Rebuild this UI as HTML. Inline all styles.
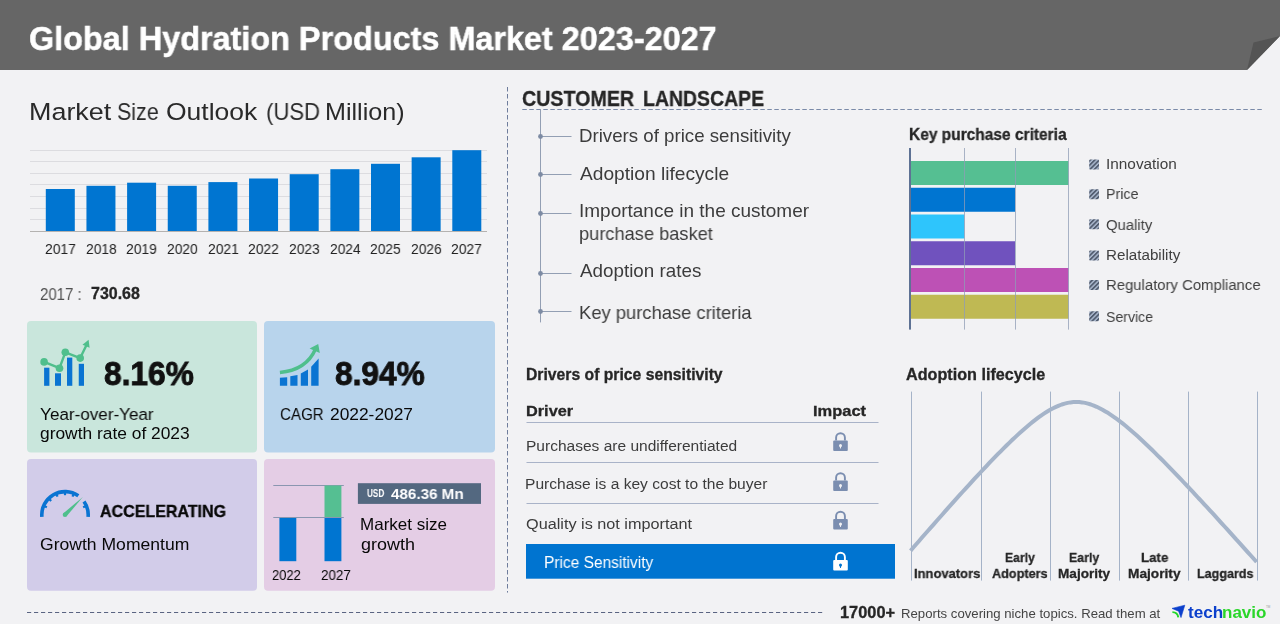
<!DOCTYPE html>
<html><head><meta charset="utf-8"><style>
html,body{margin:0;padding:0;}
body{width:1280px;height:624px;overflow:hidden;background:#f2f2f4;position:relative;font-family:"Liberation Sans",sans-serif;}
.t{position:absolute;white-space:nowrap;line-height:1;transform-origin:0 0;will-change:transform;}
svg{position:absolute;left:0;top:0;}
</style></head><body>
<svg width="1280" height="624" viewBox="0 0 1280 624">
<defs><pattern id="hatch" patternUnits="userSpaceOnUse" width="3.2" height="3.2" patternTransform="rotate(45)"><rect width="3.2" height="3.2" fill="#aebcd2"/><rect width="1.8" height="3.2" fill="#525d70"/></pattern></defs>
<polygon points="0,0 1280,0 1280,36 1247,70 0,70" fill="#666666"/>
<polygon points="1247,70 1253.5,42.5 1280,36" fill="#545454"/>
<rect x="30" y="150" width="457" height="1" fill="#dcdce0"/>
<rect x="30" y="161" width="457" height="1" fill="#dcdce0"/>
<rect x="30" y="173" width="457" height="1" fill="#dcdce0"/>
<rect x="30" y="184" width="457" height="1" fill="#dcdce0"/>
<rect x="30" y="196" width="457" height="1" fill="#dcdce0"/>
<rect x="30" y="208" width="457" height="1" fill="#dcdce0"/>
<rect x="30" y="219" width="457" height="1" fill="#dcdce0"/>
<rect x="30" y="231" width="457" height="1" fill="#b4b2b0"/>
<rect x="45.80" y="189" width="29.0" height="42.00" fill="#0075d1"/>
<rect x="86.45" y="185.8" width="29.0" height="45.20" fill="#0075d1"/>
<rect x="127.10" y="182.7" width="29.0" height="48.30" fill="#0075d1"/>
<rect x="167.75" y="185.8" width="29.0" height="45.20" fill="#0075d1"/>
<rect x="208.40" y="182.1" width="29.0" height="48.90" fill="#0075d1"/>
<rect x="249.05" y="178.5" width="29.0" height="52.50" fill="#0075d1"/>
<rect x="289.70" y="174.2" width="29.0" height="56.80" fill="#0075d1"/>
<rect x="330.35" y="169.2" width="29.0" height="61.80" fill="#0075d1"/>
<rect x="371.00" y="163.8" width="29.0" height="67.20" fill="#0075d1"/>
<rect x="411.65" y="157.3" width="29.0" height="73.70" fill="#0075d1"/>
<rect x="452.30" y="150.2" width="29.0" height="80.80" fill="#0075d1"/>
<rect x="27" y="321" width="230" height="131.5" rx="4" fill="#c9e6dc"/>
<rect x="264" y="321" width="231" height="131.5" rx="4" fill="#b8d4ec"/>
<rect x="27" y="459" width="230" height="131.7" rx="4" fill="#d2cce9"/>
<rect x="264" y="459" width="231" height="131.7" rx="4" fill="#e4cde5"/>
<rect x="44.1" y="367.7" width="5.30" height="18.10" fill="#0a74d2"/>
<rect x="55" y="373.3" width="6.00" height="12.50" fill="#0a74d2"/>
<rect x="67" y="357.6" width="5.30" height="28.20" fill="#0a74d2"/>
<rect x="78.75" y="363.8" width="5.25" height="22.00" fill="#0a74d2"/>
<polyline points="44.1,361.9 59.5,368.2 65.3,352.3 80.2,358.1 87,344" fill="none" stroke="#4fbf8c" stroke-width="2.4" stroke-linejoin="round"/>
<circle cx="44.1" cy="361.9" r="3.8" fill="#4fbf8c"/>
<circle cx="59.5" cy="368.2" r="3.8" fill="#4fbf8c"/>
<circle cx="65.3" cy="352.3" r="3.8" fill="#4fbf8c"/>
<circle cx="80.2" cy="358.1" r="3.8" fill="#4fbf8c"/>
<polygon points="82.5,344.8 88.6,339.8 89.6,347.8" fill="#4fbf8c"/>
<polygon points="279.9,377.8 287.2,377.2 287.2,385.8 279.9,385.8" fill="#0a74d2"/>
<polygon points="290.3,376.3 297.5,374.9 297.5,385.8 290.3,385.8" fill="#0a74d2"/>
<polygon points="300.8,373.5 308,369.6 308,385.8 300.8,385.8" fill="#0a74d2"/>
<polygon points="311.2,366.7 318.6,358.6 318.6,385.8 311.2,385.8" fill="#0a74d2"/>
<path d="M279.9,372.5 C296,371 309,364 315.5,349" fill="none" stroke="#4fbf8c" stroke-width="3.4"/>
<polygon points="309.6,348.6 318.2,344 319.8,353" fill="#4fbf8c"/>
<path d="M41.89,516.82 A23.2,23.2 0 0 1 78.31,495.80" fill="none" stroke="#0a74d2" stroke-width="3.6"/>
<path d="M84.00,501.49 A23.2,23.2 0 0 1 88.11,516.82" fill="none" stroke="#0a74d2" stroke-width="3.6"/>
<line x1="44.49" y1="506.30" x2="46.89" y2="507.30" stroke="#0a74d2" stroke-width="2.2"/>
<line x1="49.30" y1="499.10" x2="51.14" y2="500.94" stroke="#0a74d2" stroke-width="2.2"/>
<line x1="56.50" y1="494.29" x2="57.50" y2="496.69" stroke="#0a74d2" stroke-width="2.2"/>
<line x1="65.00" y1="492.60" x2="65.00" y2="495.20" stroke="#0a74d2" stroke-width="2.2"/>
<line x1="73.50" y1="494.29" x2="72.50" y2="496.69" stroke="#0a74d2" stroke-width="2.2"/>
<line x1="85.51" y1="506.30" x2="83.11" y2="507.30" stroke="#0a74d2" stroke-width="2.2"/>
<polygon points="63.44,513.24 82.82,496.98 66.56,516.36" fill="#4fbf8c"/>
<circle cx="65" cy="514.8" r="2.3" fill="#4fbf8c"/>
<rect x="273.3" y="485" width="70.5" height="1" fill="#8a96b0"/>
<rect x="279.4" y="517.4" width="16.9" height="43.8" fill="#0075d1"/>
<rect x="324.5" y="517.4" width="16.9" height="43.8" fill="#0075d1"/>
<rect x="324.5" y="485.5" width="16.9" height="31.9" fill="#55bf92"/>
<rect x="273.3" y="517" width="70.5" height="1" fill="#8a96b0"/>
<rect x="357.9" y="483.2" width="123.1" height="20.7" fill="#536880"/>
<line x1="507.5" y1="87" x2="507.5" y2="592.6" stroke="#6f7d9c" stroke-width="1" stroke-dasharray="4.5 2.5"/>
<line x1="522.3" y1="109.5" x2="1262" y2="109.5" stroke="#7a8aa8" stroke-width="1" stroke-dasharray="4.5 2.5"/>
<rect x="540" y="110" width="1" height="212.4" fill="#939fb3"/>
<rect x="540.5" y="136" width="31" height="1" fill="#939fb3"/>
<circle cx="540.5" cy="136.5" r="2.4" fill="#7d8ba3"/>
<rect x="540.5" y="174" width="31" height="1" fill="#939fb3"/>
<circle cx="540.5" cy="174.5" r="2.4" fill="#7d8ba3"/>
<rect x="540.5" y="213" width="31" height="1" fill="#939fb3"/>
<circle cx="540.5" cy="213.5" r="2.4" fill="#7d8ba3"/>
<rect x="540.5" y="273" width="31" height="1" fill="#939fb3"/>
<circle cx="540.5" cy="273.5" r="2.4" fill="#7d8ba3"/>
<rect x="540.5" y="311" width="31" height="1" fill="#939fb3"/>
<circle cx="540.5" cy="311.5" r="2.4" fill="#7d8ba3"/>
<rect x="911" y="161.00" width="157.50" height="24" fill="#55bf92"/>
<rect x="911" y="187.75" width="104.00" height="24" fill="#0075d1"/>
<rect x="911" y="214.50" width="53.40" height="24" fill="#2ec5fc"/>
<rect x="911" y="241.25" width="104.00" height="24" fill="#7052be"/>
<rect x="911" y="268.00" width="157.50" height="24" fill="#bd51b5"/>
<rect x="911" y="294.75" width="157.50" height="24" fill="#bfb953"/>
<rect x="964" y="148" width="1" height="181.6" fill="#8f9cb5" fill-opacity="0.75"/>
<rect x="1015" y="148" width="1" height="181.6" fill="#8f9cb5" fill-opacity="0.75"/>
<rect x="1068" y="148" width="1" height="181.6" fill="#8f9cb5" fill-opacity="0.75"/>
<rect x="909" y="148" width="2" height="181.6" fill="#5e7294"/>
<rect x="1089.2" y="159.4" width="9.8" height="10" rx="1" fill="url(#hatch)"/>
<rect x="1089.2" y="189.2" width="9.8" height="10" rx="1" fill="url(#hatch)"/>
<rect x="1089.2" y="219.3" width="9.8" height="10" rx="1" fill="url(#hatch)"/>
<rect x="1089.2" y="250.4" width="9.8" height="10" rx="1" fill="url(#hatch)"/>
<rect x="1089.2" y="280" width="9.8" height="10" rx="1" fill="url(#hatch)"/>
<rect x="1089.2" y="311.2" width="9.8" height="10" rx="1" fill="url(#hatch)"/>
<rect x="526.5" y="422" width="352" height="1" fill="#a9b3c8"/>
<rect x="526.5" y="462" width="352" height="1" fill="#a9b3c8"/>
<rect x="526.5" y="503" width="352" height="1" fill="#a9b3c8"/>
<rect x="526" y="544" width="369" height="34.7" fill="#0074d0"/>
<path d="M836.1,440.6 V437.6 A4.4,4.4 0 0 1 844.9,437.6 V440.6" fill="none" stroke="#7b8eb0" stroke-width="1.9"/><rect x="833.2" y="440.4" width="14.6" height="10.5" rx="1" fill="#7b8eb0"/><circle cx="840.5" cy="445.6" r="1.5" fill="#f2f2f4"/><polygon points="839.7,445.6 841.3,445.6 840.9,448.4 840.1,448.4" fill="#f2f2f4"/>
<path d="M836.1,480.6 V477.6 A4.4,4.4 0 0 1 844.9,477.6 V480.6" fill="none" stroke="#7b8eb0" stroke-width="1.9"/><rect x="833.2" y="480.4" width="14.6" height="10.5" rx="1" fill="#7b8eb0"/><circle cx="840.5" cy="485.6" r="1.5" fill="#f2f2f4"/><polygon points="839.7,485.6 841.3,485.6 840.9,488.4 840.1,488.4" fill="#f2f2f4"/>
<path d="M836.1,519.1 V516.1 A4.4,4.4 0 0 1 844.9,516.1 V519.1" fill="none" stroke="#7b8eb0" stroke-width="1.9"/><rect x="833.2" y="518.9" width="14.6" height="10.5" rx="1" fill="#7b8eb0"/><circle cx="840.5" cy="524.1" r="1.5" fill="#f2f2f4"/><polygon points="839.7,524.1 841.3,524.1 840.9,526.9 840.1,526.9" fill="#f2f2f4"/>
<path d="M836.1,560.1 V557.1 A4.4,4.4 0 0 1 844.9,557.1 V560.1" fill="none" stroke="#ffffff" stroke-width="1.9"/><rect x="833.2" y="559.9" width="14.6" height="10.5" rx="1" fill="#ffffff"/><circle cx="840.5" cy="565.1" r="1.5" fill="#0074d0"/><polygon points="839.7,565.1 841.3,565.1 840.9,567.9 840.1,567.9" fill="#0074d0"/>
<rect x="911" y="391.6" width="1" height="189" fill="#a5b3c8"/>
<rect x="981" y="391.6" width="1" height="189" fill="#a5b3c8"/>
<rect x="1050" y="391.6" width="1" height="189" fill="#a5b3c8"/>
<rect x="1119" y="391.6" width="1" height="189" fill="#a5b3c8"/>
<rect x="1188" y="391.6" width="1" height="189" fill="#a5b3c8"/>
<rect x="1257" y="391.6" width="1" height="189" fill="#a5b3c8"/>
<path d="M910.6,550.7 L913.5,547.3 L916.4,544.0 L919.3,540.7 L922.2,537.3 L925.1,534.0 L928.0,530.7 L931.0,527.4 L933.9,524.1 L936.8,520.8 L939.7,517.5 L942.6,514.2 L945.5,510.9 L948.4,507.6 L951.3,504.4 L954.2,501.1 L957.1,497.9 L960.0,494.7 L962.9,491.5 L965.8,488.3 L968.8,485.1 L971.7,481.9 L974.6,478.7 L977.5,475.6 L980.4,472.5 L983.3,469.4 L986.2,466.3 L989.1,463.2 L992.0,460.2 L994.9,457.2 L997.8,454.2 L1000.7,451.3 L1003.6,448.4 L1006.5,445.5 L1009.5,442.6 L1012.4,439.8 L1015.3,437.1 L1018.2,434.4 L1021.1,431.8 L1024.0,429.2 L1026.9,426.7 L1029.8,424.2 L1032.7,421.9 L1035.6,419.6 L1038.5,417.4 L1041.4,415.3 L1044.3,413.4 L1047.3,411.5 L1050.2,409.8 L1053.1,408.3 L1056.0,406.9 L1058.9,405.6 L1061.8,404.5 L1064.7,403.6 L1067.6,402.9 L1070.5,402.4 L1073.4,402.1 L1076.3,402.0 L1079.2,402.1 L1082.1,402.4 L1085.1,402.9 L1088.0,403.6 L1090.9,404.5 L1093.8,405.6 L1096.7,406.8 L1099.6,408.2 L1102.5,409.7 L1105.4,411.4 L1108.3,413.1 L1111.2,415.1 L1114.1,417.1 L1117.0,419.2 L1119.9,421.4 L1122.9,423.7 L1125.8,426.0 L1128.7,428.5 L1131.6,431.0 L1134.5,433.5 L1137.4,436.1 L1140.3,438.8 L1143.2,441.5 L1146.1,444.2 L1149.0,447.0 L1151.9,449.8 L1154.8,452.7 L1157.7,455.6 L1160.7,458.5 L1163.6,461.4 L1166.5,464.3 L1169.4,467.3 L1172.3,470.3 L1175.2,473.3 L1178.1,476.4 L1181.0,479.4 L1183.9,482.5 L1186.8,485.5 L1189.7,488.6 L1192.6,491.7 L1195.5,494.8 L1198.4,498.0 L1201.4,501.1 L1204.3,504.3 L1207.2,507.4 L1210.1,510.6 L1213.0,513.7 L1215.9,516.9 L1218.8,520.1 L1221.7,523.3 L1224.6,526.5 L1227.5,529.7 L1230.4,532.9 L1233.3,536.1 L1236.2,539.4 L1239.2,542.6 L1242.1,545.8 L1245.0,549.1 L1247.9,552.3 L1250.8,555.5 L1253.7,558.8 L1256.6,562.0" fill="none" stroke="#a5b4c9" stroke-width="4" stroke-linejoin="round"/>
<line x1="27" y1="612.5" x2="823" y2="612.5" stroke="#5a6482" stroke-width="1" stroke-dasharray="4.2 2.8"/>
<path d="M1172,608.4 L1184.8,605.2 L1181,617.6 L1178.6,611.2 Z" fill="#0c40cc" stroke="#0c40cc" stroke-width="0.6" stroke-linejoin="round"/>
<path d="M1172.4,612.1 Q1177.6,612.2 1178.3,617.4" fill="none" stroke="#22d628" stroke-width="1.9"/>
<text x="1266" y="607.5" font-family="Liberation Sans" font-size="3" fill="#9a9a9a">TM</text>
</svg>
<span class="t" style="left:29.30px;top:21.81px;font-size:33.2px;font-weight:700;color:#ffffff;transform:scaleX(0.9760);-webkit-text-stroke:0.5px #fff;">Global Hydration Products Market 2023-2027</span>
<span class="t" style="left:28.77px;top:101.10px;font-size:23.7px;font-weight:400;color:#2a2a2a;transform:scaleX(1.1368);">Market</span>
<span class="t" style="left:116.98px;top:101.10px;font-size:23.7px;font-weight:400;color:#2a2a2a;transform:scaleX(0.9045);">Size</span>
<span class="t" style="left:166.24px;top:101.10px;font-size:23.7px;font-weight:400;color:#2a2a2a;transform:scaleX(1.1180);">Outlook</span>
<span class="t" style="left:265.90px;top:101.10px;font-size:23.7px;font-weight:400;color:#2a2a2a;transform:scaleX(0.9339);">(USD</span>
<span class="t" style="left:325.21px;top:101.10px;font-size:23.7px;font-weight:400;color:#2a2a2a;transform:scaleX(1.0606);">Million)</span>
<span class="t" style="left:44.97px;top:241.76px;font-size:14.2px;font-weight:400;color:#222;transform:scaleX(0.9759);">2017</span>
<span class="t" style="left:85.62px;top:241.76px;font-size:14.2px;font-weight:400;color:#222;transform:scaleX(0.9719);">2018</span>
<span class="t" style="left:126.27px;top:241.76px;font-size:14.2px;font-weight:400;color:#222;transform:scaleX(0.9759);">2019</span>
<span class="t" style="left:166.92px;top:241.76px;font-size:14.2px;font-weight:400;color:#222;transform:scaleX(0.9719);">2020</span>
<span class="t" style="left:207.57px;top:241.76px;font-size:14.2px;font-weight:400;color:#222;transform:scaleX(0.9759);">2021</span>
<span class="t" style="left:248.22px;top:241.76px;font-size:14.2px;font-weight:400;color:#222;transform:scaleX(0.9759);">2022</span>
<span class="t" style="left:288.87px;top:241.76px;font-size:14.2px;font-weight:400;color:#222;transform:scaleX(0.9719);">2023</span>
<span class="t" style="left:329.52px;top:241.76px;font-size:14.2px;font-weight:400;color:#222;transform:scaleX(0.9679);">2024</span>
<span class="t" style="left:370.17px;top:241.76px;font-size:14.2px;font-weight:400;color:#222;transform:scaleX(0.9719);">2025</span>
<span class="t" style="left:410.82px;top:241.76px;font-size:14.2px;font-weight:400;color:#222;transform:scaleX(0.9719);">2026</span>
<span class="t" style="left:451.47px;top:241.76px;font-size:14.2px;font-weight:400;color:#222;transform:scaleX(0.9759);">2027</span>
<span class="t" style="left:40.08px;top:287.01px;font-size:15.6px;font-weight:400;color:#505050;transform:scaleX(0.9624);">2017 :</span>
<span class="t" style="left:90.77px;top:285.60px;font-size:15.8px;font-weight:700;color:#262626;transform:scaleX(1.0116);-webkit-text-stroke:0.3px #262626;">730.68</span>
<span class="t" style="left:103.83px;top:357.60px;font-size:32.8px;font-weight:700;color:#111;transform:scaleX(0.9668);-webkit-text-stroke:0.9px #111;">8.16%</span>
<span class="t" style="left:40.33px;top:405.70px;font-size:17.2px;font-weight:400;color:#080808;transform:scaleX(0.9943);">Year-over-Year</span>
<span class="t" style="left:39.94px;top:425.41px;font-size:17.2px;font-weight:400;color:#080808;transform:scaleX(1.0106);">growth rate of 2023</span>
<span class="t" style="left:334.83px;top:357.60px;font-size:32.8px;font-weight:700;color:#111;transform:scaleX(0.9657);-webkit-text-stroke:0.9px #111;">8.94%</span>
<span class="t" style="left:279.93px;top:405.70px;font-size:17.2px;font-weight:400;color:#080808;transform:scaleX(0.8792);">CAGR</span>
<span class="t" style="left:329.62px;top:405.70px;font-size:17.2px;font-weight:400;color:#080808;transform:scaleX(1.0099);">2022-2027</span>
<span class="t" style="left:100.02px;top:503.91px;font-size:16.6px;font-weight:700;color:#080808;transform:scaleX(0.9650);-webkit-text-stroke:0.35px #080808;">ACCELERATING</span>
<span class="t" style="left:39.81px;top:535.70px;font-size:17.2px;font-weight:400;color:#080808;transform:scaleX(1.0218);">Growth Momentum</span>
<span class="t" style="left:271.70px;top:567.91px;font-size:14px;font-weight:400;color:#080808;transform:scaleX(0.9277);">2022</span>
<span class="t" style="left:321.28px;top:567.91px;font-size:14px;font-weight:400;color:#080808;transform:scaleX(0.9613);">2027</span>
<span class="t" style="left:366.90px;top:488.91px;font-size:10.2px;font-weight:700;color:#fff;transform:scaleX(0.8000);">USD</span>
<span class="t" style="left:390.65px;top:485.76px;font-size:15.4px;font-weight:700;color:#fff;transform:scaleX(0.9879);">486.36 Mn</span>
<span class="t" style="left:359.78px;top:515.60px;font-size:16.5px;font-weight:400;color:#080808;transform:scaleX(1.0310);">Market size</span>
<span class="t" style="left:360.52px;top:535.60px;font-size:16.5px;font-weight:400;color:#080808;transform:scaleX(1.0883);">growth</span>
<span class="t" style="left:522.19px;top:87.60px;font-size:21.2px;font-weight:700;color:#262626;transform:scaleX(0.9279);-webkit-text-stroke:0.3px #262626;">CUSTOMER</span>
<span class="t" style="left:642.74px;top:87.60px;font-size:21.2px;font-weight:700;color:#262626;transform:scaleX(0.9187);-webkit-text-stroke:0.3px #262626;">LANDSCAPE</span>
<span class="t" style="left:578.79px;top:126.91px;font-size:18.6px;font-weight:400;color:#3c3c3c;transform:scaleX(1.0045);">Drivers of price sensitivity</span>
<span class="t" style="left:580.30px;top:164.91px;font-size:18.6px;font-weight:400;color:#3c3c3c;transform:scaleX(1.0301);">Adoption lifecycle</span>
<span class="t" style="left:578.51px;top:201.81px;font-size:18.6px;font-weight:400;color:#3c3c3c;transform:scaleX(1.0212);">Importance in the customer</span>
<span class="t" style="left:579.07px;top:224.71px;font-size:18.6px;font-weight:400;color:#3c3c3c;transform:scaleX(0.9806);">purchase basket</span>
<span class="t" style="left:580.30px;top:261.76px;font-size:18.6px;font-weight:400;color:#3c3c3c;transform:scaleX(1.0122);">Adoption rates</span>
<span class="t" style="left:578.82px;top:303.60px;font-size:18.6px;font-weight:400;color:#3c3c3c;transform:scaleX(0.9882);">Key purchase criteria</span>
<span class="t" style="left:908.62px;top:126.81px;font-size:15.8px;font-weight:700;color:#262626;transform:scaleX(0.9809);-webkit-text-stroke:0.3px #262626;">Key purchase criteria</span>
<span class="t" style="left:1105.61px;top:155.91px;font-size:15.2px;font-weight:400;color:#404040;transform:scaleX(1.0111);">Innovation</span>
<span class="t" style="left:1105.83px;top:185.70px;font-size:15.2px;font-weight:400;color:#404040;transform:scaleX(0.9374);">Price</span>
<span class="t" style="left:1106.27px;top:216.70px;font-size:15.2px;font-weight:400;color:#404040;transform:scaleX(0.9785);">Quality</span>
<span class="t" style="left:1105.75px;top:246.91px;font-size:15.2px;font-weight:400;color:#404040;transform:scaleX(0.9973);">Relatability</span>
<span class="t" style="left:1105.78px;top:276.81px;font-size:15.2px;font-weight:400;color:#404040;transform:scaleX(0.9793);">Regulatory Compliance</span>
<span class="t" style="left:1106.30px;top:308.81px;font-size:15.2px;font-weight:400;color:#404040;transform:scaleX(0.9279);">Service</span>
<span class="t" style="left:525.99px;top:366.90px;font-size:15.6px;font-weight:700;color:#262626;transform:scaleX(1.0082);-webkit-text-stroke:0.3px #262626;">Drivers of price sensitivity</span>
<span class="t" style="left:525.94px;top:402.82px;font-size:15.4px;font-weight:700;color:#262626;transform:scaleX(1.0590);-webkit-text-stroke:0.3px #262626;">Driver</span>
<span class="t" style="left:812.73px;top:402.82px;font-size:15.4px;font-weight:700;color:#262626;transform:scaleX(1.0701);-webkit-text-stroke:0.3px #262626;">Impact</span>
<span class="t" style="left:525.74px;top:437.76px;font-size:15.4px;font-weight:400;color:#3c3c3c;transform:scaleX(1.0089);">Purchases are undifferentiated</span>
<span class="t" style="left:525.34px;top:475.76px;font-size:15.4px;font-weight:400;color:#3c3c3c;transform:scaleX(1.0117);">Purchase is a key cost to the buyer</span>
<span class="t" style="left:525.81px;top:515.76px;font-size:15.4px;font-weight:400;color:#3c3c3c;transform:scaleX(1.0547);">Quality is not important</span>
<span class="t" style="left:544.38px;top:555.00px;font-size:15.8px;font-weight:400;color:#ffffff;transform:scaleX(0.9796);">Price Sensitivity</span>
<span class="t" style="left:906.02px;top:366.71px;font-size:15.8px;font-weight:700;color:#262626;transform:scaleX(1.0235);-webkit-text-stroke:0.3px #262626;">Adoption lifecycle</span>
<span class="t" style="left:913.57px;top:566.81px;font-size:13.6px;font-weight:700;color:#262626;transform:scaleX(0.9541);-webkit-text-stroke:0.3px #262626;">Innovators</span>
<span class="t" style="left:1005.02px;top:550.71px;font-size:13.6px;font-weight:700;color:#262626;transform:scaleX(0.8961);-webkit-text-stroke:0.3px #262626;">Early</span>
<span class="t" style="left:992.25px;top:566.81px;font-size:13.6px;font-weight:700;color:#262626;transform:scaleX(0.9328);-webkit-text-stroke:0.3px #262626;">Adopters</span>
<span class="t" style="left:1068.81px;top:550.71px;font-size:13.6px;font-weight:700;color:#262626;transform:scaleX(0.9085);-webkit-text-stroke:0.3px #262626;">Early</span>
<span class="t" style="left:1057.62px;top:566.81px;font-size:13.6px;font-weight:700;color:#262626;-webkit-text-stroke:0.3px #262626;">Majority</span>
<span class="t" style="left:1141.15px;top:550.71px;font-size:13.6px;font-weight:700;color:#262626;transform:scaleX(0.9765);-webkit-text-stroke:0.3px #262626;">Late</span>
<span class="t" style="left:1128.32px;top:566.81px;font-size:13.6px;font-weight:700;color:#262626;transform:scaleX(1.0073);-webkit-text-stroke:0.3px #262626;">Majority</span>
<span class="t" style="left:1196.79px;top:566.81px;font-size:13.6px;font-weight:700;color:#262626;transform:scaleX(0.9238);-webkit-text-stroke:0.3px #262626;">Laggards</span>
<span class="t" style="left:840.05px;top:604.80px;font-size:15.6px;font-weight:700;color:#262626;transform:scaleX(1.0496);-webkit-text-stroke:0.3px #262626;">17000+</span>
<span class="t" style="left:900.97px;top:607.81px;font-size:12.8px;font-weight:400;color:#444;transform:scaleX(1.0297);">Reports covering niche topics. Read them at</span>
<span class="t" style="left:1187.87px;top:604.60px;font-size:16px;font-weight:700;color:#0c40cc;transform:scaleX(1.0677);">tech</span>
<span class="t" style="left:1221.74px;top:604.60px;font-size:16px;font-weight:700;color:#2ad62a;transform:scaleX(1.0617);">navio</span>
</body></html>
